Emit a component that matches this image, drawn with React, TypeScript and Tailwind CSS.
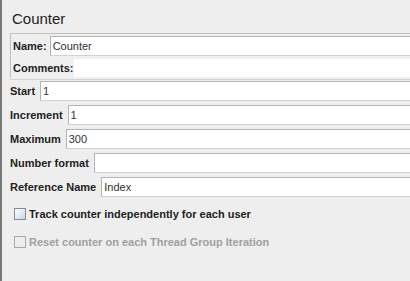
import type { ReactNode } from "react";

const font = { fontFamily: '"Liberation Sans", Arial, sans-serif' };

function Field({ value, className = "" }: { value?: string; className?: string }) {
  return (
    <div
      className={`flex h-[20px] min-w-0 flex-1 items-center border border-[#b4b4b4] border-b-[#d2d2d2] bg-white pl-[2px] text-[11px] text-[#333] ${className}`}>
      {value}
    </div>
  );
}

function Row({ label, value }: { label: string; value?: string }) {
  return (
    <div className="flex h-[20px] items-center gap-[5px]">
      <span className="shrink-0 text-[11px] font-bold text-[#222]">{label}</span>
      <Field value={value} className="-mr-[4px]" />
    </div>
  );
}

function Check({ children, disabled }: { children: ReactNode; disabled?: boolean }) {
  return (
    <div className="flex h-[14px] items-center gap-[3px] pl-[4px]">
      <div
        className={
          disabled
            ? "h-[12px] w-[12px] border border-[#a8a8a8] bg-[#eeeeee]"
            : "h-[12px] w-[12px] border border-[#7e8c9c] bg-gradient-to-br from-white to-[#c8d6e6]"
        }
      />
      <span className={`text-[11px] font-bold ${disabled ? "text-[#a0a0a0]" : "text-[#222]"}`}>
        {children}
      </span>
    </div>
  );
}

export default function App() {
  return (
    <div
      style={font}
      className="h-[281px] w-[410px] overflow-hidden border-l-2 border-l-[#787878] bg-[#eeeeee]">
      {/* Title */}
      <div className="pl-[10px] pt-[10px] text-[15px] leading-[18px] text-[#222]">Counter</div>

      {/* Name / comments panel */}
      <div className="ml-[8px] mt-[5px] -mr-[4px] border-l border-t border-[#c2c2c2] bg-[#efefef] pb-[1px]">
        <div className="flex items-center gap-[3px] pl-[2px] pt-[2px]">
          <span className="text-[11px] font-bold text-[#222]">Name:</span>
          <Field value="Counter" className="h-[19px]" />
        </div>
        <div className="mt-[3px] flex items-center pl-[2px]">
          <span className="text-[11px] font-bold text-[#222]">Comments:</span>
          <div className="h-[18px] flex-1 bg-white" />
        </div>
      </div>
      <div className="-mr-[4px] ml-[8px] h-[2px] border-b border-[#d4d4d4]" />

      {/* Counter settings */}
      <div className="mt-[1px] flex flex-col gap-[4px] pl-[8px]">
        <Row label="Start" value="1" />
        <Row label="Increment" value="1" />
        <Row label="Maximum" value="300" />
        <Row label="Number format" />
        <Row label="Reference Name" value="Index" />
      </div>

      <div className="mt-[10px] flex flex-col gap-[14px] pl-[8px]">
        <Check>Track counter independently for each user</Check>
        <Check disabled>Reset counter on each Thread Group Iteration</Check>
      </div>
    </div>
  );
}
